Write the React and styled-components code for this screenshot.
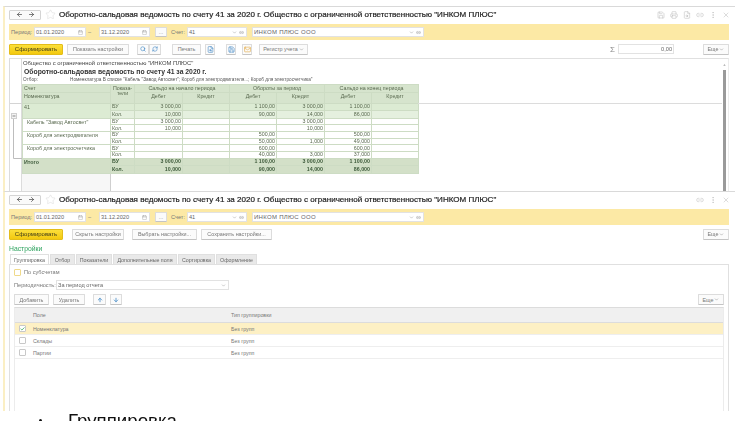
import React from "react";
import styled, { createGlobalStyle } from "styled-components";
import {
  ArrowLeft,
  ArrowRight,
  ArrowUp,
  ArrowDown,
  Star,
  Save,
  Printer,
  FileSearch,
  Link2,
  MoreVertical,
  X,
  Calendar,
  Search,
  RefreshCw,
  Mail,
  ChevronDown,
  Check,
} from "lucide-react";

const GlobalStyle = createGlobalStyle`
  html, body { margin: 0; padding: 0; background: #fff; }
  body { font-family: "Liberation Sans", Arial, sans-serif; color: #555; }
`;

const Page = styled.div`
  width: 737px;
  height: 421px;
  overflow: hidden;
  padding-top: 6px;
  box-sizing: border-box;
  filter: blur(0.35px);
`;

const Window = styled.section`
  height: ${(p) => p.$h}px;
  margin-left: 3px;
  margin-right: 2px;
  padding: 0 6px 0 4px;
  box-sizing: border-box;
  border-top: 1px solid #d9d9d9;
  border-left: 2px solid #fbefc4;
  display: flex;
  flex-direction: column;
  overflow: hidden;
`;

const TitleRow = styled.div`
  height: 17px;
  flex: none;
  display: flex;
  align-items: center;
`;

const NavGroup = styled.div`
  width: 32px;
  height: 10px;
  margin-top: -2px;
  box-sizing: border-box;
  border: 1px solid #d4d4d4;
  border-radius: 1px;
  background: #fafafa;
  display: flex;
  align-items: center;
  justify-content: space-around;
  padding: 0 3px;
  color: #444;
`;

const StarIcon = styled(Star)`
  margin: -2px 0 0 4px;
  color: #d4d4d4;
`;

const Title = styled.h1`
  margin: -2px 0 0 3px;
  font-size: 8.05px;
  font-weight: normal;
  color: #222;
  white-space: nowrap;
  -webkit-text-stroke: 0.2px #222;
`;

const WindowIcons = styled.div`
  margin-left: auto;
  margin-right: -1px;
  margin-top: -2px;
  display: flex;
  gap: 5px;
  color: #b4b4b4;
`;

const FilterBand = styled.div`
  height: 16px;
  flex: none;
  display: flex;
  align-items: center;
  background: #fce9a5;
  padding-left: 2px;
  font-size: 5.6px;
  color: #777;
`;

const BandLabel = styled.span`
  margin-left: ${(p) => p.$ml || 0}px;
  width: ${(p) => p.$w}px;
  flex: none;
`;

const Field = styled.div`
  width: ${(p) => p.$w}px;
  height: 10px;
  flex: none;
  box-sizing: border-box;
  margin-left: ${(p) => p.$ml || 0}px;
  border: 1px solid #e2e2e2;
  background: #fff;
  display: flex;
  align-items: center;
  padding-left: 1px;
  font-size: ${(p) => p.$fs || 5.6}px;
  letter-spacing: ${(p) => p.$ls || 0}px;
  color: #666;
  & > span {
    flex: 1;
    white-space: nowrap;
  }
  & > svg {
    margin-right: 2px;
    color: #888;
    flex: none;
  }
`;

const Toolbar = styled.div`
  height: 18px;
  flex: none;
  display: flex;
  align-items: center;
`;

const Button = styled.button`
  width: ${(p) => p.$w}px;
  height: ${(p) => p.$h || 11}px;
  flex: none;
  margin-left: ${(p) => p.$ml || 0}px;
  padding: 0;
  box-sizing: border-box;
  border: 1px solid #dcdcdc;
  border-bottom-color: #c4c4c4;
  border-radius: 1px;
  background: #fbfbfb;
  font: 5.4px "Liberation Sans", Arial, sans-serif;
  color: #777;
  display: flex;
  align-items: center;
  justify-content: center;
  gap: 1px;
  white-space: nowrap;
`;

const MainButton = styled(Button)`
  background: linear-gradient(#fbdf3a, #f3c90f);
  border-color: #e3bd1a;
  font-size: 6px;
  color: #3d3a1a;
`;

const Blue = styled.span`
  display: flex;
  color: #3f86c4;
`;

const Orange = styled.span`
  display: flex;
  color: #e2a63a;
`;

const SumBox = styled.div`
  margin-left: auto;
  display: flex;
  align-items: center;
  font-size: 8px;
  color: #888;
`;

const SumField = styled(Field)`
  justify-content: flex-end;
  padding-right: 1px;
  margin-left: 3px;
  color: #666;
`;

const ReportPanel = styled.div`
  flex: 1;
  display: flex;
  border-top: 1px solid #e0e0e0;
  border-left: 1px solid #dcdcdc;
  border-right: 1px solid #ececec;
  min-height: 0;
`;

const Gutter = styled.div`
  position: relative;
  width: 11px;
  flex: none;
  border-right: 1px solid #dcdcdc;
`;

const TreeLines = styled.svg`
  position: absolute;
  left: 0;
  top: 44px;
`;

const Report = styled.div`
  position: relative;
  flex: 1;
  min-width: 0;
`;

const RightRule = styled.div`
  position: absolute;
  left: 396px;
  right: 0;
  top: 44px;
  border-top: 1px solid #dcdcdc;
`;

const OrgLine = styled.div`
  height: 8px;
  padding-left: 1px;
  font-size: 5.9px;
  line-height: 8px;
  color: #444;
`;

const ReportTitle = styled.div`
  height: 9px;
  padding-left: 2px;
  font-size: 6.8px;
  line-height: 9px;
  font-weight: bold;
  color: #333;
`;

const Selection = styled.div`
  height: 7px;
  padding-left: 1px;
  display: flex;
  font-size: 4.7px;
  line-height: 7px;
  color: #555;
  white-space: nowrap;
  & > span:first-child {
    width: 47px;
  }
`;

const SheetTable = styled.table`
  width: 396px;
  border-collapse: collapse;
  table-layout: fixed;
  font-size: 5.3px;
  color: #5a6a50;
  margin-top: 0.5px;
  td, th {
    padding: 0 1px;
    font-weight: inherit;
    overflow: hidden;
    white-space: nowrap;
    border: 1px solid #cddcc4;
    line-height: 5px;
  }
`;

const HeadCell = styled.th`
  background: #d6e4cd;
  text-align: ${(p) => p.$align || "center"};
  vertical-align: top;
  && { white-space: ${(p) => (p.$wrap ? "normal" : "nowrap")}; padding-top: 1px; }
`;

const Row = styled.tr`
  height: ${(p) => p.$h}px;
  background: ${(p) =>
    p.$kind === "group" ? "#dcebd3" : p.$kind === "groupAlt" ? "#e5f0df" : p.$kind === "total" ? "#d3e0c8" : "#fff"};
  font-weight: ${(p) => (p.$kind === "total" ? "bold" : "normal")};
  color: ${(p) => (p.$kind === "total" ? "#3d5a3a" : "inherit")};
`;

const NameCell = styled.td`
  vertical-align: top;
  && { padding-left: ${(p) => p.$indent || 1}px; padding-top: 1px; }
`;

const NumCell = styled.td`
  text-align: right;
`;

const BlankArea = styled.div`
  width: 88px;
  height: 20px;
  background: #f7f7f7;
  border-right: 1px solid #cfcfcf;
`;

const ScrollTrack = styled.div`
  width: 5px;
  flex: none;
  margin-right: 1px;
  color: #bbb;
  font-size: 4px;
  text-align: center;
  line-height: 11px;
`;

const ScrollThumb = styled.div`
  width: 3px;
  height: 130px;
  margin: 0 auto;
  background: #9a9a9a;
`;

const SettingsTitle = styled.div`
  height: 10px;
  flex: none;
  margin-top: 1px;
  font-size: 6.8px;
  line-height: 9px;
  color: #2fa35f;
`;

const Tabs = styled.div`
  height: 11px;
  flex: none;
  display: flex;
  padding-left: 1px;
  gap: 1px;
`;

const Tab = styled.div`
  width: ${(p) => p.$w}px;
  box-sizing: border-box;
  background: ${(p) => (p.$active ? "#fff" : "#e9e9e9")};
  border: 1px solid #e0e0e0;
  border-bottom: ${(p) => (p.$active ? "none" : "1px solid #e0e0e0")};
  font-size: 5.3px;
  line-height: 10px;
  text-align: center;
  color: #666;
  white-space: nowrap;
`;

const SettingsPanel = styled.div`
  flex: 1;
  min-height: 0;
  box-sizing: border-box;
  margin-top: -1px;
  border: 1px solid #e0e0e0;
  border-bottom: none;
  padding: 2px 4px 0;
  display: flex;
  flex-direction: column;
  font-size: 5.6px;
  color: #777;
`;

const CheckRow = styled.div`
  height: 10px;
  flex: none;
  display: flex;
  align-items: center;
  gap: 3px;
`;

const CheckBox = styled.span`
  width: ${(p) => p.$size || 6}px;
  height: ${(p) => p.$size || 6}px;
  flex: none;
  box-sizing: border-box;
  border: 1px solid ${(p) => p.$border || "#c8c8c8"};
  border-radius: 1px;
  background: #fff;
  display: flex;
  align-items: center;
  justify-content: center;
  color: #27a24a;
`;

const PeriodRow = styled.div`
  height: 10px;
  flex: none;
  margin-top: 3px;
  display: flex;
  align-items: center;
`;

const CmdRow = styled.div`
  height: 11px;
  flex: none;
  margin-top: 4px;
  display: flex;
  align-items: center;
`;

const RightButton = styled(Button)`
  margin-left: auto;
`;

const GridBox = styled.div`
  flex: 1;
  min-height: 0;
  margin-top: 2px;
  border: 1px solid #ececec;
  border-top: 1px solid #dcdcdc;
  border-bottom: none;
`;

const GridLine = styled.div`
  height: ${(p) => p.$h || 12}px;
  box-sizing: border-box;
  display: grid;
  grid-template-columns: 15px 201px 1fr;
  align-items: center;
  background: ${(p) => (p.$head ? "#f0f0f0" : p.$active ? "#fdf0c4" : "#fff")};
  border-bottom: 1px solid ${(p) => (p.$head ? "#dcdcdc" : "#eeeeee")};
  font-size: 5.3px;
  color: #777;
  & > :first-child {
    justify-self: center;
  }
  & > :nth-child(2) {
    padding-left: 3px;
  }
`;

const BulletLine = styled.div`
  display: flex;
  align-items: flex-start;
  height: 20px;
  padding-left: 39px;
  margin-top: -0.5px;
  font-size: 18.7px;
  line-height: 20px;
  color: #111;
  & > i {
    width: 3px;
    height: 3px;
    margin-top: 8px;
    margin-right: 26px;
    background: #111;
    border-radius: 50%;
  }
`;

const ChevronIcon = () => <ChevronDown size={5} strokeWidth={2} />;

const Header = ({ full }) => (
  <>
    <TitleRow>
      <NavGroup>
        <ArrowLeft size={7} strokeWidth={2.4} />
        <ArrowRight size={7} strokeWidth={2.4} />
      </NavGroup>
      <StarIcon size={11} strokeWidth={1} />
      <Title>
        Оборотно-сальдовая ведомость по счету 41 за 2020 г. Общество с ограниченной ответственностью "ИНКОМ ПЛЮС"
      </Title>
      <WindowIcons>
        {full && <Save size={8} strokeWidth={1.4} />}
        {full && <Printer size={8} strokeWidth={1.4} />}
        {full && <FileSearch size={8} strokeWidth={1.4} />}
        <Link2 size={8} strokeWidth={1.4} />
        <MoreVertical size={8} strokeWidth={1.4} />
        <X size={8} strokeWidth={1.4} />
      </WindowIcons>
    </TitleRow>
    <FilterBand>
      <BandLabel $w={23}>Период:</BandLabel>
      <Field $w={52}>
        <span>01.01.2020</span>
        <Calendar size={5} strokeWidth={1.6} />
      </Field>
      <BandLabel $w={11} $ml={2}>–</BandLabel>
      <Field $w={51}>
        <span>31.12.2020</span>
        <Calendar size={5} strokeWidth={1.6} />
      </Field>
      <Button $w={12} $h={10} $ml={5}>...</Button>
      <BandLabel $w={16} $ml={4}>Счет:</BandLabel>
      <Field $w={60}>
        <span>41</span>
        <ChevronIcon />
        <Link2 size={5} />
      </Field>
      <Field $w={172} $ml={5} $fs={6} $ls={0.3}>
        <span>ИНКОМ ПЛЮС ООО</span>
        <ChevronIcon />
        <Link2 size={5} />
      </Field>
    </FilterBand>
  </>
);

const sheetRows = [
  { name: "41", indent: 1, kind: "group", h: 7.5, cols: [["БУ", "3 000,00", "", "1 100,00", "3 000,00", "1 100,00", ""], ["Кол.", "10,000", "", "90,000", "14,000", "86,000", ""]] },
  { name: 'Кабель "Завод Автосвет"', indent: 4, h: 6.7, cols: [["БУ", "3 000,00", "", "", "3 000,00", "", ""], ["Кол.", "10,000", "", "", "10,000", "", ""]] },
  { name: "Короб для электродвигателя", indent: 4, h: 6.7, cols: [["БУ", "", "", "500,00", "", "500,00", ""], ["Кол.", "", "", "50,000", "1,000", "49,000", ""]] },
  { name: "Короб для электросчетчика", indent: 4, h: 6.7, cols: [["БУ", "", "", "600,00", "", "600,00", ""], ["Кол.", "", "", "40,000", "3,000", "37,000", ""]] },
  { name: "Итого", indent: 1, kind: "total", h: 7.5, cols: [["БУ", "3 000,00", "", "1 100,00", "3 000,00", "1 100,00", ""], ["Кол.", "10,000", "", "90,000", "14,000", "86,000", ""]] },
];

const Sheet = () => (
  <SheetTable>
    <colgroup>
      <col width="88" />
      <col width="24" />
      <col width="48" />
      <col width="47" />
      <col width="47" />
      <col width="48" />
      <col width="47" />
      <col width="47" />
    </colgroup>
    <thead>
      <Row $h={8}>
        <HeadCell $align="left">Счет</HeadCell>
        <HeadCell rowSpan={2} $wrap>Показа-<br />тели</HeadCell>
        <HeadCell colSpan={2}>Сальдо на начало периода</HeadCell>
        <HeadCell colSpan={2}>Обороты за период</HeadCell>
        <HeadCell colSpan={2}>Сальдо на конец периода</HeadCell>
      </Row>
      <Row $h={11}>
        <HeadCell $align="left">Номенклатура</HeadCell>
        <HeadCell>Дебет</HeadCell>
        <HeadCell>Кредит</HeadCell>
        <HeadCell>Дебет</HeadCell>
        <HeadCell>Кредит</HeadCell>
        <HeadCell>Дебет</HeadCell>
        <HeadCell>Кредит</HeadCell>
      </Row>
    </thead>
    <tbody>
      {sheetRows.map((group) =>
        group.cols.map((cols, i) => (
          <Row key={group.name + i} $h={group.h} $kind={group.kind === "group" && i === 1 ? "groupAlt" : group.kind}>
            {i === 0 && (
              <NameCell rowSpan={2} $indent={group.indent}>
                {group.name}
              </NameCell>
            )}
            <td>{cols[0]}</td>
            {cols.slice(1).map((value, j) => (
              <NumCell key={j}>{value}</NumCell>
            ))}
          </Row>
        ))
      )}
    </tbody>
  </SheetTable>
);

const App = () => (
  <Page>
    <GlobalStyle />
    <Window $h={185}>
      <Header full />
      <Toolbar>
        <MainButton $w={54}>Сформировать</MainButton>
        <Button $w={62} $ml={4}>Показать настройки</Button>
        <Button $w={12} $ml={8}><Blue><Search size={6} strokeWidth={2.4} /></Blue></Button>
        <Button $w={12}><Blue><RefreshCw size={6} strokeWidth={2.2} /></Blue></Button>
        <Button $w={29} $ml={11}>Печать</Button>
        <Button $w={10} $ml={4}><Blue><FileSearch size={7} strokeWidth={2} /></Blue></Button>
        <Button $w={10} $ml={11}><Blue><Save size={7} strokeWidth={2} /></Blue></Button>
        <Button $w={10} $ml={6}><Orange><Mail size={7} strokeWidth={2} /></Orange></Button>
        <Button $w={49} $ml={7}>Регистр учета <ChevronIcon /></Button>
        <SumBox>
          Σ
          <SumField $w={56} $ml={3}>0,00</SumField>
        </SumBox>
        <Button $w={26} $ml={29}>Еще <ChevronIcon /></Button>
      </Toolbar>
      <ReportPanel>
        <Gutter>
          <TreeLines width="12" height="72" viewBox="0 0 12 72">
            <line x1="0" y1="0.5" x2="12" y2="0.5" stroke="#d4d4d4" />
            <rect x="1.5" y="10.5" width="5" height="5" fill="#f4f4f4" stroke="#cfcfcf" />
            <line x1="2.5" y1="13" x2="5.5" y2="13" stroke="#888" />
            <path d="M3.5 16V55.5H12" fill="none" stroke="#bdbdbd" />
          </TreeLines>
        </Gutter>
        <Report>
          <OrgLine>Общество с ограниченной ответственностью "ИНКОМ ПЛЮС"</OrgLine>
          <ReportTitle>Оборотно-сальдовая ведомость по счету 41 за 2020 г.</ReportTitle>
          <Selection>
            <span>Отбор:</span>
            <span>Номенклатура В списке "Кабель "Завод Автосвет"; Короб для электродвигателя...; Короб для электросчетчика"</span>
          </Selection>
          <Sheet />
          <BlankArea />
          <RightRule />
        </Report>
        <ScrollTrack>
          ▲
          <ScrollThumb />
        </ScrollTrack>
      </ReportPanel>
    </Window>
    <Window $h={220}>
      <Header />
      <Toolbar>
        <MainButton $w={54}>Сформировать</MainButton>
        <Button $w={52} $ml={9}>Скрыть настройки</Button>
        <Button $w={65} $ml={8}>Выбрать настройки...</Button>
        <Button $w={71} $ml={4}>Сохранить настройки...</Button>
        <RightButton $w={26}>Еще <ChevronIcon /></RightButton>
      </Toolbar>
      <SettingsTitle>Настройки</SettingsTitle>
      <Tabs>
        <Tab $w={39} $active>Группировка</Tab>
        <Tab $w={25}>Отбор</Tab>
        <Tab $w={36}>Показатели</Tab>
        <Tab $w={64}>Дополнительные поля</Tab>
        <Tab $w={37}>Сортировка</Tab>
        <Tab $w={41}>Оформление</Tab>
      </Tabs>
      <SettingsPanel>
        <CheckRow>
          <CheckBox $border="#efd98a" $size={7} />
          По субсчетам
        </CheckRow>
        <PeriodRow>
          <BandLabel $w={42}>Периодичность:</BandLabel>
          <Field $w={173}>
            <span>За период отчета</span>
            <ChevronIcon />
          </Field>
        </PeriodRow>
        <CmdRow>
          <Button $w={35}>Добавить</Button>
          <Button $w={32} $ml={4}>Удалить</Button>
          <Button $w={13} $ml={8}><Blue><ArrowUp size={6} strokeWidth={3} /></Blue></Button>
          <Button $w={12} $ml={4}><Blue><ArrowDown size={6} strokeWidth={3} /></Blue></Button>
          <RightButton $w={26}>Еще <ChevronIcon /></RightButton>
        </CmdRow>
        <GridBox>
          <GridLine $head $h={15}>
            <span />
            <span>Поле</span>
            <span>Тип группировки</span>
          </GridLine>
          <GridLine $active>
            <CheckBox $size={7}><Check size={6} strokeWidth={3.5} /></CheckBox>
            <span>Номенклатура</span>
            <span>Без групп</span>
          </GridLine>
          <GridLine>
            <CheckBox $size={7} />
            <span>Склады</span>
            <span>Без групп</span>
          </GridLine>
          <GridLine>
            <CheckBox $size={7} />
            <span>Партии</span>
            <span>Без групп</span>
          </GridLine>
        </GridBox>
      </SettingsPanel>
    </Window>
    <BulletLine>
      <i />
      Группировка
    </BulletLine>
  </Page>
);

export default App;
